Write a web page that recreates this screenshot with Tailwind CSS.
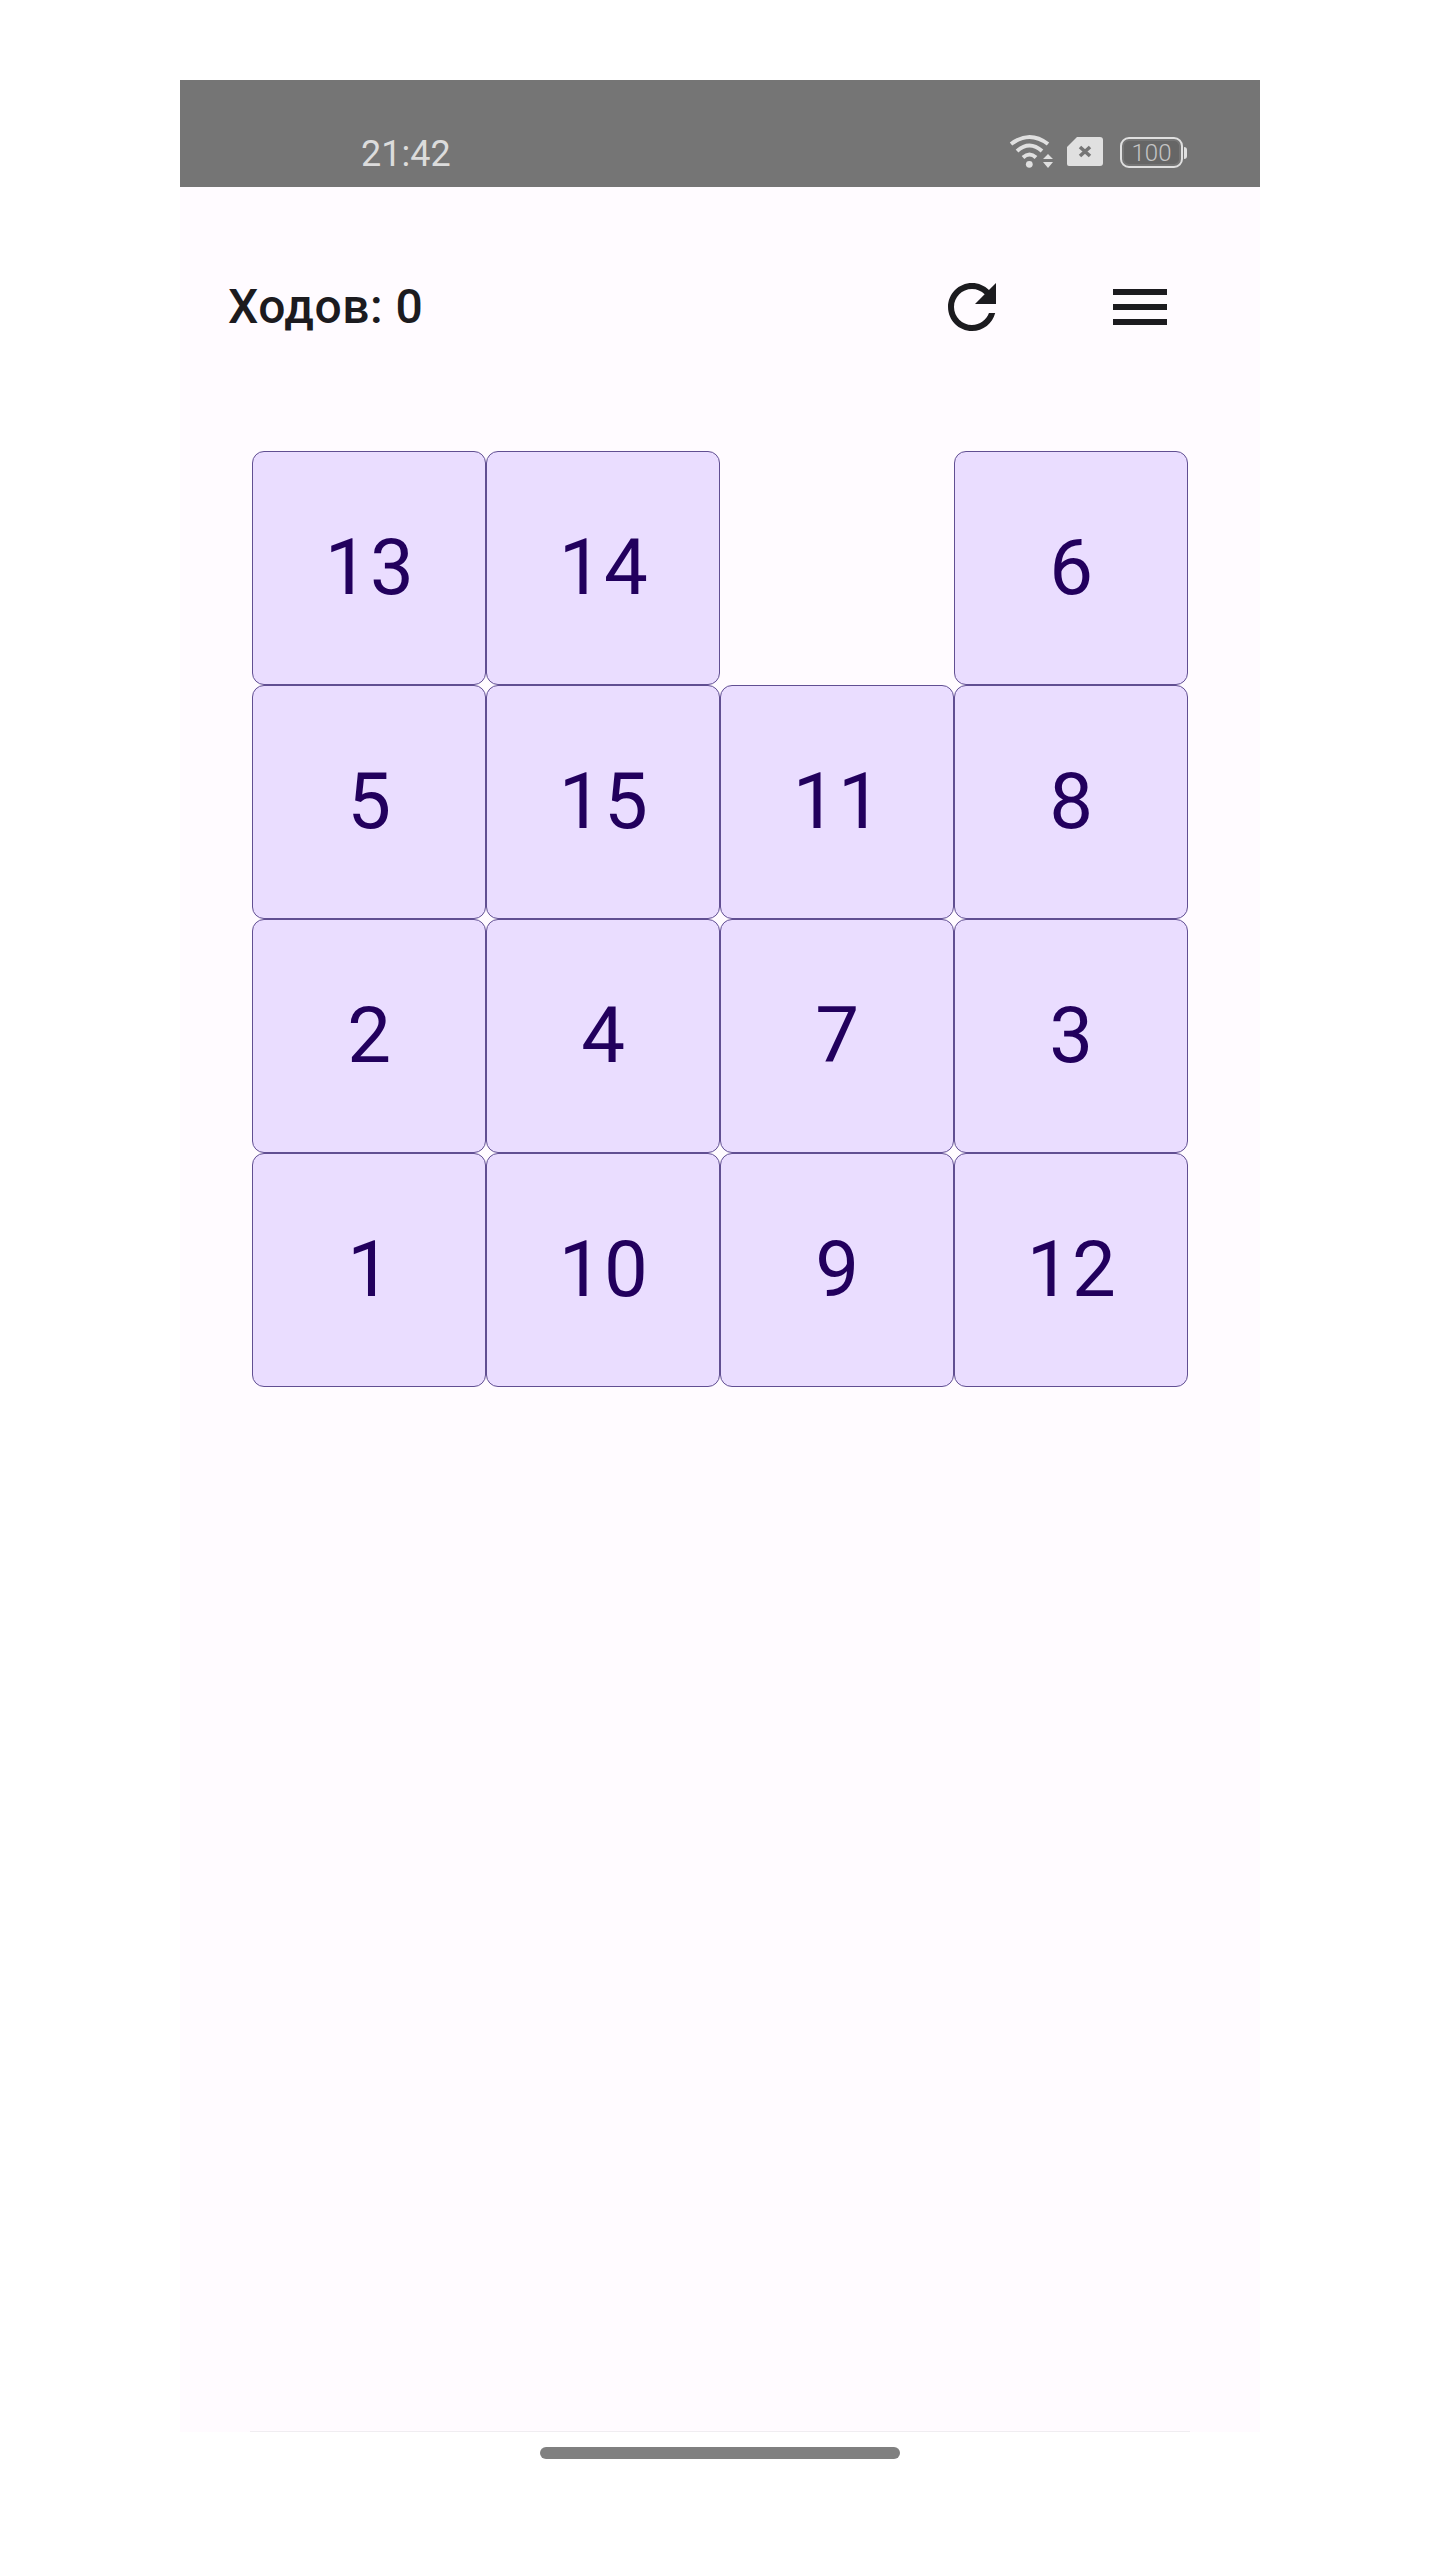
<!DOCTYPE html>
<html lang="ru">
<head>
    <meta charset="UTF-8">
    <meta name="viewport" content="width=device-width, initial-scale=1.0">
    <title>Пятнашки</title>
    <script src="https://cdn.jsdelivr.net/npm/@tailwindcss/browser@4"></script>
</head>
<body class="bg-white font-['Roboto',sans-serif]">
    <div class="w-[1440px] h-[2560px] pt-[80px] pl-[180px]">
        <div class="w-[1080px]">
            <!-- status bar -->
            <div class="flex items-start h-[107px] bg-[#757575] pl-[181px]">
                <span class="mt-[50px] text-[36px] leading-[48px] text-[#dcdcdc]">21:42</span>
                <div class="flex items-start ml-auto mr-[73px] mt-[54px]">
                    <svg class="w-[45px] h-[35px]" viewBox="0 0 45 35" fill="none">
                        <path d="M2 10Q20.5 -4 39 10" stroke="#e0e0e0" stroke-width="4" />
                        <path d="M8 17Q20.5 6 33 17" stroke="#e0e0e0" stroke-width="4" />
                        <path d="M14 23.5Q20.5 17.5 27 23.5" stroke="#e0e0e0" stroke-width="4" />
                        <circle cx="20.3" cy="30.3" r="3.4" fill="#e0e0e0" />
                        <path d="M34 25H44L39 20ZM34 28H44L39 34Z" fill="#e0e0e0" />
                    </svg>
                    <svg class="w-[36px] h-[29px] ml-[13px] mt-[3px]" viewBox="0 0 36 29">
                        <path d="M10 0H33Q36 0 36 3V26Q36 29 33 29H2Q0 29 0 27V10Z" fill="#e0e0e0" />
                        <path d="M13 10L23 19M23 10L13 19" stroke="#757575" stroke-width="3.6" />
                    </svg>
                    <div class="flex items-center ml-[17px] mt-[3px]">
                        <div class="w-[63px] h-[31px] rounded-[9px] border-2 border-[#e0e0e0] p-[2px]">
                            <div class="flex items-center justify-center h-full rounded-[5px] bg-[#666666] text-[24px] leading-none font-light text-[#c4c4c4]">100</div>
                        </div>
                        <div class="w-[3px] h-[12px] ml-[1px] rounded-r-sm bg-[#e0e0e0]"></div>
                    </div>
                </div>
            </div>

            <!-- game screen -->
            <div class="h-[2245px] bg-[#fffbff] relative">
                <div class="flex items-center h-[240px] pl-[48px] pr-[84px]">
                    <span class="text-[48px] font-medium tracking-[0.5px] text-[#1c1b1f]">Ходов: 0</span>
                    <svg class="w-[72px] h-[72px] ml-auto" viewBox="0 0 24 24" fill="#1c1b1f">
                        <path d="M17.65 6.35C16.2 4.9 14.21 4 12 4c-4.42 0-7.99 3.58-7.99 8s3.57 8 7.99 8c3.73 0 6.84-2.55 7.73-6h-2.08c-.82 2.33-3.04 4-5.65 4-3.31 0-6-2.69-6-6s2.69-6 6-6c1.66 0 3.14.69 4.22 1.78L13 11h7V4l-2.35 2.35z" />
                    </svg>
                    <svg class="w-[72px] h-[72px] ml-[96px]" viewBox="0 0 24 24" fill="#1c1b1f">
                        <path d="M3 18h18v-2H3v2zm0-5h18v-2H3v2zm0-7v2h18V6H3z" />
                    </svg>
                </div>
                <div class="grid grid-cols-[repeat(4,234px)] auto-rows-[234px] ml-[72px] mt-[24px] text-[78px] tracking-[1.5px] text-[#22005d]">
                    <div class="flex items-center justify-center pb-[2px] pl-[2px] rounded-[12px] border border-[#614f92] bg-[#eaddff]">13</div>
                    <div class="flex items-center justify-center pb-[2px] pl-[2px] rounded-[12px] border border-[#614f92] bg-[#eaddff]">14</div>
                    <div></div>
                    <div class="flex items-center justify-center pb-[2px] pl-[2px] rounded-[12px] border border-[#614f92] bg-[#eaddff]">6</div>
                    <div class="flex items-center justify-center pb-[2px] pl-[2px] rounded-[12px] border border-[#614f92] bg-[#eaddff]">5</div>
                    <div class="flex items-center justify-center pb-[2px] pl-[2px] rounded-[12px] border border-[#614f92] bg-[#eaddff]">15</div>
                    <div class="flex items-center justify-center pb-[2px] pl-[2px] rounded-[12px] border border-[#614f92] bg-[#eaddff]">11</div>
                    <div class="flex items-center justify-center pb-[2px] pl-[2px] rounded-[12px] border border-[#614f92] bg-[#eaddff]">8</div>
                    <div class="flex items-center justify-center pb-[2px] pl-[2px] rounded-[12px] border border-[#614f92] bg-[#eaddff]">2</div>
                    <div class="flex items-center justify-center pb-[2px] pl-[2px] rounded-[12px] border border-[#614f92] bg-[#eaddff]">4</div>
                    <div class="flex items-center justify-center pb-[2px] pl-[2px] rounded-[12px] border border-[#614f92] bg-[#eaddff]">7</div>
                    <div class="flex items-center justify-center pb-[2px] pl-[2px] rounded-[12px] border border-[#614f92] bg-[#eaddff]">3</div>
                    <div class="flex items-center justify-center pb-[2px] pl-[2px] rounded-[12px] border border-[#614f92] bg-[#eaddff]">1</div>
                    <div class="flex items-center justify-center pb-[2px] pl-[2px] rounded-[12px] border border-[#614f92] bg-[#eaddff]">10</div>
                    <div class="flex items-center justify-center pb-[2px] pl-[2px] rounded-[12px] border border-[#614f92] bg-[#eaddff]">9</div>
                    <div class="flex items-center justify-center pb-[2px] pl-[2px] rounded-[12px] border border-[#614f92] bg-[#eaddff]">12</div>
                </div>
                <div class="absolute bottom-0 left-[70px] right-[70px] h-px bg-[#f0edf1]"></div>
            </div>

            <!-- home indicator -->
            <div class="w-[360px] h-[12px] mx-auto mt-[15px] rounded-full bg-[#808080]"></div>
        </div>
    </div>
</body>
</html>
